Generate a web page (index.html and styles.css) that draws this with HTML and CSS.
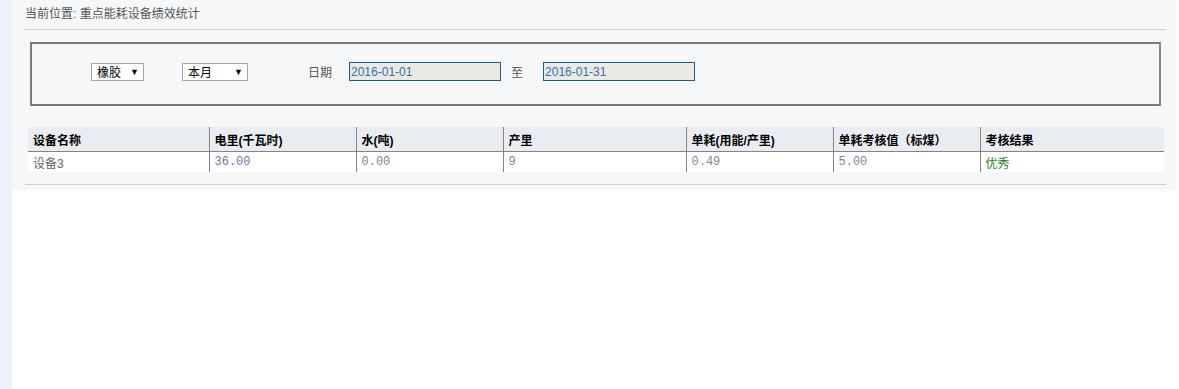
FILE: index.html
```html
<!DOCTYPE html>
<html lang="zh">
<head>
    <meta charset="UTF-8">
    <title>重点能耗设备绩效统计</title>
    <link rel="stylesheet" href="styles.css">
</head>
<body>
    <div class="sidebar"></div>

    <div class="main">
        <div class="panel">
            <div class="crumb">当前位置: 重点能耗设备绩效统计</div>

            <!-- 查询条件 -->
            <div class="filter">
                <div class="select sel-type"><span>橡胶</span><i>▼</i></div>
                <div class="select sel-period"><span>本月</span><i>▼</i></div>
                <span class="label">日期</span>
                <input class="date" type="text" value="2016-01-01">
                <span class="label to">至</span>
                <input class="date" type="text" value="2016-01-31">
            </div>

            <!-- 统计结果 -->
            <table class="grid">
                <colgroup>
                    <col style="width:181px">
                    <col style="width:147px">
                    <col style="width:147px">
                    <col style="width:183px">
                    <col style="width:147px">
                    <col style="width:147px">
                    <col>
                </colgroup>
                <thead>
                    <tr>
                        <th>设备名称</th>
                        <th>电里(千瓦时)</th>
                        <th>水(吨)</th>
                        <th>产里</th>
                        <th>单耗(用能/产里)</th>
                        <th>单耗考核值（标煤）</th>
                        <th>考核结果</th>
                    </tr>
                </thead>
                <tbody>
                    <tr>
                        <td class="name">设备3</td>
                        <td class="num blue">36.00</td>
                        <td class="num">0.00</td>
                        <td class="num">9</td>
                        <td class="num">0.49</td>
                        <td class="num">5.00</td>
                        <td class="good">优秀</td>
                    </tr>
                </tbody>
            </table>

            <div class="bottom-line"></div>
        </div>
    </div>
</body>
</html>
```

FILE: styles.css
```css
/* Styles généraux */
html, body {
    height: 100%;
}

body {
    margin: 0;
    display: flex;
    background: #ffffff;
    font-family: "Liberation Sans", "Noto Sans CJK SC", sans-serif;
    font-size: 12px;
    color: #333;
}

.sidebar {
    width: 12px;
    flex: none;
    background: #edf1fb;
}

.main {
    flex: 1;
}

.panel {
    width: 1164px;
    background: #f6f7f9;
    padding: 6px 0 5px 13px;
    box-sizing: border-box;
}

.crumb {
    width: 1141px;
    height: 16px;
    line-height: 16px;
    padding-bottom: 7px;
    color: #555;
    font-size: 12px;
    border-bottom: 1px solid #cfcfd2;
}

/* Zone de filtre */
.filter {
    width: 1131px;
    height: 64px;
    margin: 12px 0 0 5px;
    box-sizing: border-box;
    border: 2px solid #7a7a7a;
    border-right-color: #8a8a8a;
    display: flex;
    align-items: center;
    padding: 0 0 5px 59px;
}

.select {
    height: 18px;
    box-sizing: border-box;
    border: 1px solid #a6a6a6;
    background: #ffffff;
    display: flex;
    align-items: center;
    justify-content: space-between;
    padding: 0 4px 0 5px;
    color: #000;
    font-size: 12px;
}

.select i {
    font-style: normal;
    font-size: 9px;
}

.sel-type {
    width: 53px;
}

.sel-period {
    width: 66px;
    margin-left: 38px;
}

.label {
    color: #555;
    margin-left: 60px;
}

.label.to {
    margin-left: 10px;
}

.date {
    width: 152px;
    height: 19px;
    box-sizing: border-box;
    margin-left: 17px;
    padding: 0 1px;
    border: 1px solid #1f5a8c;
    background: #ebe9e3;
    color: #3a6ea5;
    font-family: "Liberation Sans", sans-serif;
    font-size: 12px;
}

.date + .label.to + .date {
    margin-left: 20px;
}

/* Tableau */
.grid {
    width: 1136px;
    margin: 21px 0 0 3px;
    border-collapse: collapse;
    table-layout: fixed;
}

.grid th {
    height: 24px;
    padding: 0 5px;
    text-align: left;
    font-weight: bold;
    color: #000;
    background: #e9edf2;
    border-bottom: 1px solid #858585;
}

.grid td {
    height: 20px;
    padding: 0 5px;
    background: #ffffff;
    color: #888;
}

.grid th + th,
.grid td + td {
    border-left: 1px solid #858585;
}

.grid .name {
    color: #666;
}

.grid .num {
    font-family: "Liberation Mono", monospace;
    font-size: 12px;
    color: #8a8096;
}

.grid .num.blue {
    color: #6a78a8;
}

.grid .good {
    color: #1a7f1a;
}

.bottom-line {
    width: 1141px;
    margin-top: 12px;
    border-top: 1px solid #cfcfd2;
}
```
